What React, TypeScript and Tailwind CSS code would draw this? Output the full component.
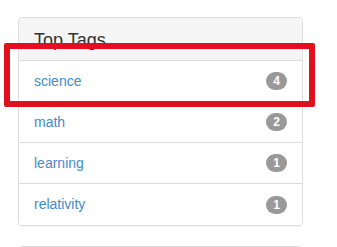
import React from "react";

const tags = [
  { name: "science", count: 4 },
  { name: "math", count: 2 },
  { name: "learning", count: 1 },
  { name: "relativity", count: 1 },
];

export default function App() {
  return (
    <div
      className="relative w-[337px] h-[247px] overflow-hidden bg-white"
      style={{ fontFamily: '"Liberation Sans", Arial, sans-serif' }}
    >
      <div className="pt-[17px] pl-[18px] w-[303px]">
        <div className="border border-[#dddddd] rounded-[4px] shadow-[0_1px_1px_rgba(0,0,0,0.05)] overflow-hidden">
          <div className="h-[43px] bg-[#f5f5f5] border-b border-[#dddddd] px-[15px] flex items-center">
            <h3 className="text-[18px] leading-[20px] text-[#333333] pt-[2px]">Top Tags</h3>
          </div>
          {tags.map((t, i) => (
            <div
              key={t.name}
              className={
                "h-[41px] px-[15px] flex items-center justify-between bg-white " +
                (i < tags.length - 1 ? "border-b border-[#dddddd]" : "h-[40px]")
              }
            >
              <span className="text-[14px] text-[#428bca]">{t.name}</span>
              <span className="bg-[#999999] text-white text-[12px] font-bold leading-[12px] px-[7px] py-[3px] rounded-[10px]">
                {t.count}
              </span>
            </div>
          ))}
        </div>
        <div className="mt-[20px] h-[20px] border border-[#dddddd] rounded-[4px] bg-white" />
      </div>
      <div className="absolute left-[4px] top-[43px] w-[311px] h-[64px] border-[6px] border-[#e20f1c] rounded-[2px]" />
    </div>
  );
}
